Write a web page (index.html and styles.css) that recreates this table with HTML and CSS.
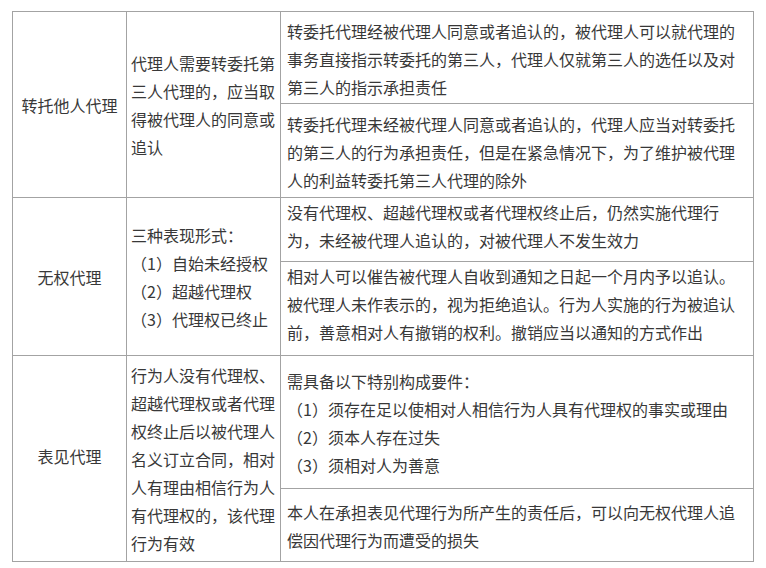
FILE: index.html
```html
<!DOCTYPE html>
<html lang="zh-CN">
<head>
<meta charset="utf-8">
<title>代理</title>
<link rel="stylesheet" href="styles.css">
</head>
<body>
<table class="agency">
  <colgroup>
    <col class="c-type">
    <col class="c-desc">
    <col class="c-rule">
  </colgroup>
  <tbody>
    <tr class="r1a">
      <td class="type" rowspan="2">转托他人代理</td>
      <td class="desc" rowspan="2">代理人需要转委托第三人代理的，应当取得被代理人的同意或追认</td>
      <td class="rule">转委托代理经被代理人同意或者追认的，被代理人可以就代理的事务直接指示转委托的第三人，代理人仅就第三人的选任以及对第三人的指示承担责任</td>
    </tr>
    <tr class="r1b">
      <td class="rule">转委托代理未经被代理人同意或者追认的，代理人应当对转委托的第三人的行为承担责任，但是在紧急情况下，为了维护被代理人的利益转委托第三人代理的除外</td>
    </tr>
    <tr class="r2a">
      <td class="type" rowspan="2">无权代理</td>
      <td class="desc" rowspan="2">
        <div>三种表现形式：</div>
        <div>（1）自始未经授权</div>
        <div>（2）超越代理权</div>
        <div>（3）代理权已终止</div>
      </td>
      <td class="rule rule-top">没有代理权、超越代理权或者代理权终止后，仍然实施代理行为，未经被代理人追认的，对被代理人不发生效力</td>
    </tr>
    <tr class="r2b">
      <td class="rule rule-top">相对人可以催告被代理人自收到通知之日起一个月内予以追认。被代理人未作表示的，视为拒绝追认。行为人实施的行为被追认前，善意相对人有撤销的权利。撤销应当以通知的方式作出</td>
    </tr>
    <tr class="r3a">
      <td class="type type-raised" rowspan="2">表见代理</td>
      <td class="desc" rowspan="2">行为人没有代理权、超越代理权或者代理权终止后以被代理人名义订立合同，相对人有理由相信行为人有代理权的，该代理行为有效</td>
      <td class="rule">
        <div>需具备以下特别构成要件：</div>
        <div>（1）须存在足以使相对人相信行为人具有代理权的事实或理由</div>
        <div>（2）须本人存在过失</div>
        <div>（3）须相对人为善意</div>
      </td>
    </tr>
    <tr class="r3b">
      <td class="rule">本人在承担表见代理行为所产生的责任后，可以向无权代理人追偿因代理行为而遭受的损失</td>
    </tr>
  </tbody>
</table>
</body>
</html>
```
FILE: styles.css
```css
html, body {
  margin: 0;
  background: #ffffff;
}

body {
  padding: 11px 0 0 12px;
  font-family: "Noto Sans CJK SC", "Noto Sans", sans-serif;
  font-size: 16px;
  line-height: 28px;
  color: #383838;
  text-spacing-trim: space-all;
}

.agency {
  border-collapse: collapse;
  table-layout: fixed;
  width: 741px;
}

.agency td {
  border: 1px solid #a3a3a3;
  vertical-align: middle;
  padding: 0;
}

.c-type { width: 114px; }
.c-desc { width: 154px; }
.c-rule { width: 473px; }

.type {
  text-align: center;
}

.type-raised {
  padding-bottom: 6px !important;
}

.desc {
  padding: 0 4px !important;
}

.rule {
  padding: 2px 6px 0 !important;
}

.rule-top {
  vertical-align: top !important;
  padding-top: 0 !important;
}

.r1a { height: 92px; }
.r1b { height: 94px; }
.r2a { height: 64px; }
.r2b { height: 94px; }
.r3a { height: 133px; }
.r3b { height: 73px; }
```
